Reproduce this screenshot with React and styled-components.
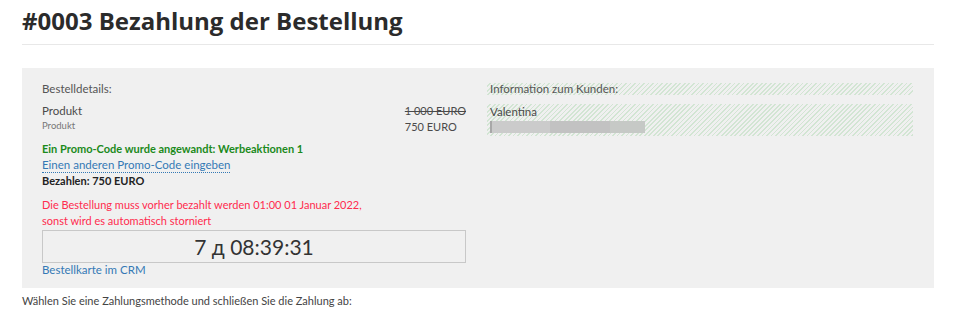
import * as React from "react";
import styled, { createGlobalStyle } from "styled-components";

const GlobalStyle = createGlobalStyle`
  body {
    margin: 0;
    background: #fff;
    font-family: "Lato", "Open Sans", sans-serif;
    color: #4a4a4a;
  }
`;

const Page = styled.div`
  margin: 0 30px 0 22px;
`;

const Title = styled.h1`
  margin: 0;
  padding: 7px 0 9px;
  font-family: "Open Sans", sans-serif;
  font-size: 24px;
  font-weight: 700;
  line-height: 28px;
  color: #2b2b2b;
  border-bottom: 1px solid #e8e8e8;
`;

const Panel = styled.div`
  margin-top: 23px;
  background: #f0f0f0;
  padding: 13px 21px 11px 20px;
  display: grid;
  grid-template-columns: 424px 1fr;
  column-gap: 21px;
`;

const Column = styled.div`
  display: flex;
  flex-direction: column;
  font-size: 11.5px;
  line-height: 16px;
`;

const Label = styled.div`
  font-size: 11.5px;
  color: #555;
  margin-bottom: ${(p) => p.$gap || 0}px;
`;

const ProductRow = styled.div`
  display: flex;
  justify-content: space-between;
  align-items: flex-start;
  margin-bottom: 6px;
`;

const ProductName = styled.div`
  color: #4a4a4a;
  font-size: 11.5px;
`;

const ProductSub = styled.div`
  color: #777;
  font-size: 9.5px;
  line-height: 14px;
`;

const Prices = styled.div`
  text-align: left;
  color: #4a4a4a;
  font-size: 11px;
`;

const OldPrice = styled.div`
  text-decoration: line-through;
`;

const Promo = styled.div`
  color: #1b8a1b;
  font-weight: 700;
  font-size: 11px;
`;

const Link = styled.a`
  color: #3479b5;
  text-decoration: none;
  font-size: 11.5px;
  align-self: flex-start;
  border-bottom: ${(p) => (p.$dotted ? "1px dotted #3479b5" : "none")};
  line-height: ${(p) => (p.$dotted ? "15px" : "14px")};
`;

const Total = styled.div`
  color: #222;
  font-weight: 700;
  font-size: 11px;
`;

const Warning = styled.div`
  margin-top: 8px;
  color: #ff2b4e;
  font-size: 11px;
`;

const Timer = styled.div`
  height: 31px;
  border: 1px solid #c8c8c8;
  display: flex;
  align-items: center;
  justify-content: center;
  font-size: 21px;
  color: #333;
  margin-top: 1px;
`;

const Hatch = styled.div`
  background: repeating-linear-gradient(
    135deg,
    #f0f0f0 0 2px,
    #d2e5d3 2px 3.2px
  );
  margin-bottom: ${(p) => p.$gap || 0}px;
  padding-left: 3px;
`;

const HatchLine = styled(Hatch)`
  height: 12px;
  line-height: 12px;
  margin-top: 2px;
  font-size: 11.5px;
  color: #555;
`;

const CustomerName = styled.div`
  font-size: 11.5px;
  line-height: 16px;
  color: #4a4a4a;
`;

const Blurred = styled.div`
  width: 155px;
  height: 12px;
  margin: 1px 0 3px;
  background: linear-gradient(90deg, #a8a8a8 0 2px, #cbcbcb 2px 60px, #c2c2c2 60px 120px, #c6c9c6 120px);
  filter: blur(0.6px);
`;

const Footer = styled.div`
  margin-top: 6px;
  font-size: 11px;
  line-height: 14px;
  color: #444;
`;

export default function App() {
  return (
    <Page>
      <GlobalStyle />
      <Title>#0003 Bezahlung der Bestellung</Title>
      <Panel>
        <Column>
          <Label $gap={6}>Bestelldetails:</Label>
          <ProductRow>
            <div>
              <ProductName>Produkt</ProductName>
              <ProductSub>Produkt</ProductSub>
            </div>
            <Prices>
              <OldPrice>1 000 EURO</OldPrice>
              <div>750 EURO</div>
            </Prices>
          </ProductRow>
          <Promo>Ein Promo-Code wurde angewandt: Werbeaktionen 1</Promo>
          <Link href="#" $dotted>Einen anderen Promo-Code eingeben</Link>
          <Total>Bezahlen: 750 EURO</Total>
          <Warning>
            Die Bestellung muss vorher bezahlt werden 01:00 01 Januar 2022,
            <br />
            sonst wird es automatisch storniert
          </Warning>
          <Timer>7 д 08:39:31</Timer>
          <Link href="#">Bestellkarte im CRM</Link>
        </Column>
        <Column>
          <HatchLine $gap={9}>Information zum Kunden:</HatchLine>
          <Hatch>
            <CustomerName>Valentina</CustomerName>
            <Blurred />
          </Hatch>
        </Column>
      </Panel>
      <Footer>Wählen Sie eine Zahlungsmethode und schließen Sie die Zahlung ab:</Footer>
    </Page>
  );
}
